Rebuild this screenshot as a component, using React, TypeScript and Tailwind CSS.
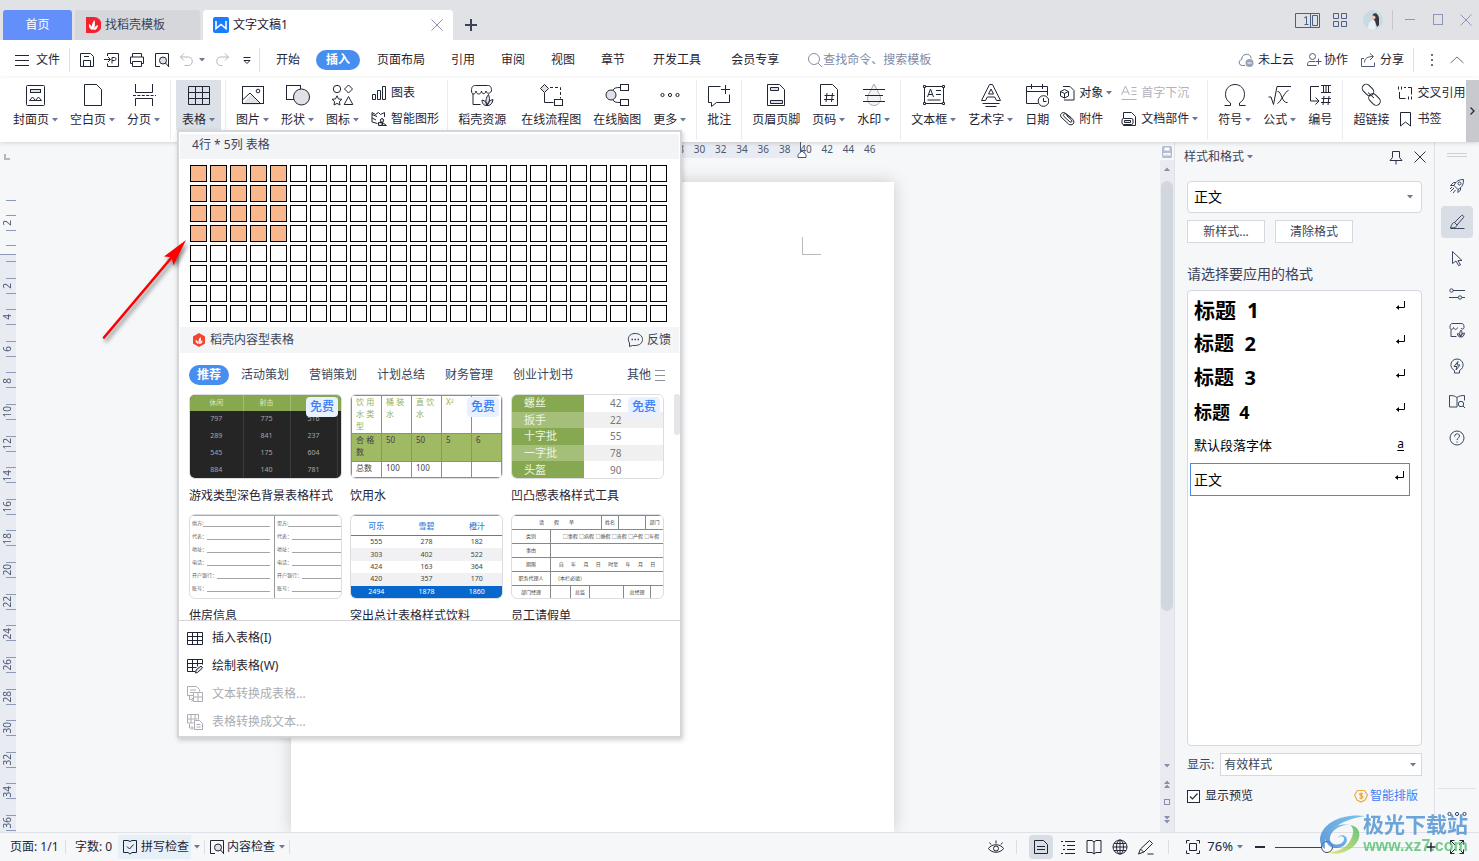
import { useState } from 'react';
import type { ReactNode } from 'react';

/* ---------- icons ---------- */

const SOFT = '#dfe1e6';

const icons: Record<string, ReactNode> = {
  // ribbon, 24 x 24
  cover: (
    <>
      <rect x="2.5" y="2.5" width="18" height="20" rx="1" />
      <rect x="6.5" y="6.5" width="10" height="3" fill={SOFT} />
      <path d="M5.5 17.5l3-3.5 3 3.5zM11.5 17.5l3-3.5 3 3.5z" />
    </>
  ),
  blank: <path d="M3.5 1.5h12l5 5v16h-17z M15.5 1.5l5 5" />,
  pageBreak: (
    <>
      <path d="M3.5 1v8.500h17V1M3.500 23v-7.500h17V23" />
      <path d="M1 12.500h23" strokeDasharray="3 1.400" />
    </>
  ),
  table: <path d="M1.500 3.500h21v18h-21zM1.500 9.500h21M1.500 15.500h21M8.500 3.500v18M15.500 9.500v12M15.500 9.500v-6" />,
  picture: (
    <>
      <path d="M2 20.500l8-9 10 10H2z" fill={SOFT} stroke="none" />
      <rect x="1.500" y="3.500" width="21" height="17" />
      <path d="M1.500 17l7.500-7 10.500 10.500" />
      <circle cx="17" cy="8" r="1.800" />
    </>
  ),
  shape: (
    <>
      <rect x="0.500" y="2.500" width="14" height="14" />
      <circle cx="15.500" cy="14" r="8" fill={SOFT} />
    </>
  ),
  glyphs: (
    <>
      <circle cx="6" cy="6" r="3.700" />
      <path d="M17.500 2l4 4-4 4-4-4zM6 12.800l1.500 3.100 3.400.4-2.500 2.300.6 3.400-3-1.600-3 1.600.6-3.400-2.500-2.300 3.400-.4zM17.500 13.500l4.300 8h-8.600z" />
    </>
  ),
  shop: (
    <>
      <path d="M10.500 21.500h-7.500v-11M1.500 8c0-4 1-5.500 4-5.500h12c3 0 4 1.500 4 5.500M1.500 8c0 4 4 4 4.500 0 .5 4 5 4 5.500 0 .5 4 4 3 4.500 0 .5 3 4 3 5.500 0" />
      <path d="M17 22.500c-2-4-1-8 1.500-11 1.500 4 1.500 7-1.500 11zM17 22.500c-3 0-5-1.500-5-5.500 3 .5 5 2.500 5 5.500zM17 22.500c3 .5 5.500-2 6-6-3 .5-5.500 3-6 6z" fill={SOFT} />
    </>
  ),
  flow: (
    <>
      <path d="M5.500 1.500l4 4-4 4-4-4z" fill={SOFT} />
      <path d="M5.500 10v9.500h9" />
      <path d="M11 4.500h10.500v11" strokeDasharray="3 2" />
      <rect x="15.500" y="16.500" width="8" height="6" />
    </>
  ),
  mind: (
    <>
      <circle cx="6" cy="12" r="5" fill={SOFT} />
      <rect x="15.500" y="1.500" width="8" height="6" />
      <rect x="15.500" y="16.500" width="8" height="6" />
      <path d="M8 7c1-2 3-2.500 7-2.500M8 17c1 2 3 2.500 7 2.500" />
    </>
  ),
  more: (
    <>
      <circle cx="4.500" cy="12" r="1.600" />
      <circle cx="12" cy="12" r="1.600" />
      <circle cx="19.500" cy="12" r="1.600" />
    </>
  ),
  comment: <path d="M13.500 3.500h-12v16h3v4l5-4h13v-8M18.500 2v9M14 6.500h9" />,
  headerFooter: (
    <>
      <path d="M3.500 1.500h12l5 5v16h-17z" />
      <path d="M6.500 4.500h8v3h-8zM6.500 17.500h12v3h-12z" fill={SOFT} />
    </>
  ),
  pageNo: <path d="M3.500 1.500h12l5 5v16h-17zM10 10l-1 9M15.500 10l-1 9M7.500 12.500h10M7 16.500h10" />,
  watermark: (
    <>
      <path d="M12 1l-5.500 10.500c-3 6 1 11 5.500 11s8.500-5 5.500-11z" fill="#f3f3f6" stroke="#a5a9b6" />
      <path d="M1 6.500h22M3 12.500h18M1 18.500h22" />
    </>
  ),
  textBox: (
    <>
      <rect x="2.500" y="3.500" width="19" height="17" />
      <path d="M5.500 14l3-8 3 8M6.500 11.500h4M14 7.500h5M14 11.500h5M5.500 17h13" />
      <path d="M1.500 2.500h2v2h-2zM20.500 2.500h2v2h-2zM1.500 19.500h2v2h-2zM20.500 19.500h2v2h-2z" fill="#fff" />
    </>
  ),
  wordArt: (
    <>
      <path d="M10.500 1.500h3l8 16h-4l-1.800-3.500h-7.400l-1.800 3.500h-4zM12 6l-2.500 5h5z" />
      <path d="M3.500 20.500h17M6.500 23.500h11" />
    </>
  ),
  date: (
    <>
      <path d="M13 20.500h-11.500v-17h21v9M1.500 8.500h21M6.500 1v5M17.500 1v5" />
      <circle cx="18.500" cy="18" r="5.300" fill="#fff" />
      <path d="M18.500 15v3.500h3" />
    </>
  ),
  omega: <path d="M1.500 22.500h6v-2.500c-3-1.800-5-4.500-5-8.500 0-6 4.200-10 9.500-10s9.500 4 9.500 10c0 4-2 6.700-5 8.500v2.500h6" />,
  formula: <path d="M0.500 14h2.500l2.500 7.500 3.500-18h14M9.500 8.500c4-1 4 12 10 11M20.500 7.500c-3 0-8 12-11 13" />,
  numbering: <path d="M11 3.500h-8.500v14.500h8M7.500 14.500l3.500 3.500-3.500 3.500M13 2.500h10M13 9.500h10M15.500 2.500v7M18 2.500v7M20.500 2.500v7M16 13l-1 9M21 13l-1 9M13.500 15.500h9.500M13 19.500h9.500" />,
  link: (
    <>
      <rect x="2.500" y="3" width="13" height="8" rx="4" transform="rotate(45 9 7)" />
      <rect x="9" y="12.500" width="13" height="8" rx="4" transform="rotate(45 15.500 16.500)" />
      <path d="M9 9.500l6 5.500" />
    </>
  ),
  // 16 x 16
  chart: <path d="M1.500 9.500h3v5h-3zM6.500 5.500h3v9h-3zM11.500 1.500h3v13h-3z" />,
  smartArt: (
    <>
      <path d="M6.500 12.500l-5.500-1.500v-9.500l3.500 2 3-2M1 3.500l5 2M1 7l4 2M13.500 6v-4.500l-4 2-2-2" />
      <path d="M11 7.500c2 0 2 3 1 3.500h-2c-1-.5-1-3.500 1-3.500zM7.500 11.500h3.500v3h-3.500zM11.500 11.500l4 3h-4z" fill={SOFT} />
    </>
  ),
  object: (
    <>
      <path d="M4 1.500h7l4 4v9.500h-10" />
      <path d="M5.500 4.500l4 2v4.500l-4 2-4-2v-4.500zM1.500 6.500l4 2 4-2M5.500 8.500v4.500" fill="#fff" />
    </>
  ),
  clip: <path d="M12 6.500l-6-4.500c-3-1.500-5.500 1.500-4 4l7.500 7c3.500 2.500 7-1 4.500-4.500l-7-5.500c-2-.8-3.500 1-2 2.500l6 5.500c1.500.7 2.500-.6 1.500-2l-5-4.500" />,
  dropCap: <path d="M0.500 10l4-9 4 9M2 7h5M10.500 2.500h5M10.500 6h5M10.500 9.500h5M0.500 14.500h15" />,
  parts: (
    <>
      <path d="M2.500 7v-5.500h8l4 4v9h-12v-1" />
      <rect x="1" y="7.500" width="11" height="6" rx="1.500" fill="#fff" />
      <path d="M3.500 9.500h6v2h-6z" fill={SOFT} />
    </>
  ),
  crossRef: <path d="M2.500 7v6.500h6M11 2.500h3.500v7M1.500 1.500v3M4.500 1.500v3M7 2.500h2M11.500 11.500v3M14.500 11.500v3" />,
  bookmark: <path d="M3.500 1.500h10v13.500l-5-4-5 4z" />,
  save: <path d="M1.500 1.500h10l3 3v10h-13zM4.500 14.500v-6h7v6M5 4.500h5" />,
  exportPdf: <path d="M3.500 4v-2.500h11v13h-11v-3M0 7.500h6M4 5l2.500 2.500-2.500 2.500M8 11.500v-6h2.500c2 0 2 3 0 3h-2.500" />,
  print: <path d="M3.500 5v-3.500h9v3.500M3.500 11.500h-2v-6.500h13v6.500h-2M3.500 9.500h9v5h-9z" />,
  preview: (
    <>
      <path d="M6 14.500h-4.500v-13h13v13" />
      <circle cx="9" cy="8.500" r="3.500" fill={SOFT} />
      <path d="M11.500 11l3.500 4" />
    </>
  ),
  undo: <path d="M5 1.500l-3.500 3.500 3.500 3.500M1.500 5h8c5 0 5 8.500 0 8.500h-4" />,
  redo: <path d="M11 1.500l3.500 3.500-3.500 3.500M14.500 5h-8c-5 0-5 8.500 0 8.500h2" />,
  chevBar: <path d="M4.500 5.500h7M5 8.500l3 3 3-3z" />,
  search: (
    <>
      <circle cx="7" cy="7" r="5.500" />
      <path d="M11 11l4 4" />
    </>
  ),
  cloud: (
    <>
      <path d="M7 13.500h-2.500c-4 0-4.500-5-.8-6 0-6.500 9-7 9.500-1" />
      <circle cx="11.500" cy="11" r="4" fill="#9aa3ba" stroke="none" />
      <path d="M9.500 11h4" stroke="#fff" />
    </>
  ),
  people: (
    <>
      <circle cx="6.500" cy="4.500" r="3" />
      <path d="M9 9.500h-5c-2 0-2.500 1.500-2.500 4h9M12.500 6.500v6M9.500 9.500h6" />
    </>
  ),
  share: <path d="M4 6.500h-2.500v8h13v-4M4.500 10.500c0-4 3-6 8.500-6M10 1.500l3.500 3-3.500 3.500" />,
  close: <path d="M2.500 2.500l11 11M13.500 2.500l-11 11" />,
  plus: <path d="M8 2v12M2 8h12" strokeWidth="2" />,
  min: <path d="M3 7.500h10" />,
  max: <rect x="3.500" y="2.500" width="9" height="10" />,
  up: <path d="M1.500 11l6.500-6 6.500 6" />,
  burger: <path d="M1 3.500h14M1 8.500h14M1 13.500h14" />,
  grid4: <path d="M1.500 1.500h5v5h-5zM9.500 1.500h5v5h-5zM1.500 9.500h5v5h-5zM9.500 9.500h5v5h-5z" />,
  pin: <path d="M4.500 2.500h7v6l2.500 3h-12l2.500-3zM8 11.500v4" />,
  bubble: (
    <>
      <path d="M2.500 14.500v-3.500c-3-5 0-9.500 5.500-9.500 4.500 0 7.500 2.500 7.500 6s-3 6-7.500 6h-2.500z" />
      <path d="M4.500 7.500h1.500M7.500 7.500h1.500M10.500 7.500h1.500" strokeWidth="1.500" />
    </>
  ),
  grid: <path d="M0.500 2.500h15v12h-15zM0.500 6.500h15M0.500 10.500h15M5.500 2.500v12M10.500 2.500v12" />,
  drawGrid: (
    <>
      <path d="M8 13.500h-7.500v-12h15v5M0.500 5.500h15M0.500 9.500h9M5.500 1.500v12M10.500 1.500v7" />
      <path d="M8.500 15l.5-3 5-4 1.500 2-5 4.500z" fill={SOFT} />
    </>
  ),
  textToTable: <path d="M6 9.500h-5.500v-9h9l3 3v2M3 4h6M3 6.500h3M6.500 6.500h9v9h-9zM6.500 11h9M11 6.500v9M2.500 9.500v4h3M4.500 11.500l2 2-2 2" />,
  tableToText: <path d="M0.500 0.500h11v5M0.500 5h10M0.500 9h6M0.500 .5v8.500M4 .5v8.500M8 .5v5M7.500 6.500h5l3 3v6h-8zM9.500 10.500h4M9.500 13h4M2.500 10v4h3M4.500 12l2 2-2 2" />,
  rocket: (
    <>
      <path d="M5 7.500c2-4.500 5-6 9.500-6 0 4.500-1 7.500-5.500 10zM5 7.500l-3.500 0 3-3h2.500M9 11.500v3l2.500-2.500v-2.500M5 10l-3.500 3.500M3 9l-2 2M6.500 12l-2.500 3" />
      <circle cx="10.500" cy="5.500" r="1.500" />
    </>
  ),
  brush: <path d="M1.500 14.500h14M5.500 8.500l7-7c1-1 3 1 2 2l-6.500 7.500zM5.500 8.500c-2 0-2.500 1.500-4 5.500 4 0 6.500-1 6.500-3z" />,
  cursor: <path d="M3.500 1.500l9.500 9h-4l2.500 4.500-2 .5-2.500-4.500-3.500 2.500z" />,
  sliders: (
    <>
      <path d="M4 4.500h12M0 11.500h9M13 11.500h3" />
      <circle cx="2.500" cy="4.500" r="1.700" />
      <circle cx="11" cy="11.500" r="1.700" />
    </>
  ),
  sideShop: (
    <>
      <path d="M7.500 14.500h-5.500v-7M1 5.500c0-3 .5-4 3-4h8c2.500 0 3 1 3 4 0 2-2.500 2-3 .5M1 5.500c0 2.500 3 2.500 3.500 0 .5 2.500 3.500 2.500 4 0" />
      <path d="M11.500 15c-1.500-2.500-1-5 .5-7 1.500 2 1.500 5-.5 7zM11.500 15c-2 0-3-1.500-3-3.500 1.500 0 3 1.500 3 3.500zM11.500 15c2 .5 3.500-1 4-4-2 0-4 2-4 4z" fill={SOFT} />
    </>
  ),
  bulb: <path d="M5.500 12.500c-6-3-4-11.500 2.500-11.500s8.500 8.500 2.500 11.500v2.500h-5zM9 3.500l-4 5h3l-1 3.500 4-5h-3z" />,
  bookSearch: (
    <>
      <path d="M8 3.500c-2-1.500-4-2-7.500-2v11.500h7.500zM8 3.500c2-1.500 4-2 7.500-2v5" />
      <circle cx="12" cy="10" r="2.700" />
      <path d="M14 12l2 2" />
    </>
  ),
  help: (
    <>
      <circle cx="8" cy="8" r="7" />
      <path d="M5.500 6.500c0-3.500 5-3.500 5-.5 0 2-2.500 2-2.500 4M8 11.500v1.200" />
    </>
  ),
  spell: <path d="M8 2.500l-2-1h-4.500v12h4.500l2 1.500 2-1.500h4.500v-12h-4.500zM5 7.500l2.500 2.500 4-4.500" />,
  eye: (
    <>
      <path d="M0.500 9.500c3-5 12-5 15 0-3 5-12 5-15 0zM3 5.500l-1.500-2M8 4.500v-3M13 5.500l1.500-2" />
      <circle cx="8" cy="9.500" r="2.500" />
    </>
  ),
  doc: <path d="M1.500 1.500h9l4 4v9h-13zM4 7.500h8M4 10.500h8" />,
  outline: <path d="M1 2.500h2M5 2.500h10M3 6.500h2M7 6.500h8M3 10.500h2M7 10.500h8M1 14.500h2M5 14.500h10" />,
  book: <path d="M8 3l-2-1.500h-5v12h5l2 1.500 2-1.500h5v-12h-5zM8 3v11.500" />,
  globe: (
    <>
      <circle cx="8" cy="8" r="7" />
      <ellipse cx="8" cy="8" rx="3.500" ry="7" />
      <path d="M1 8h14M2 4.500h12M2 11.500h12M8 1v14" />
    </>
  ),
  pen: <path d="M0.500 15l2-5 9-8.500 3 3-8.500 8.500zM2.500 10l3 3M9.500 15h6" />,
  fit: <path d="M4.500 4.500h7v7h-7zM1.500 4.500v-3h3M11.500 1.500h3v3M14.500 11.500v3h-3M4.500 14.500h-3v-3" />,
  full: <path d="M6 6l-4.500-4.500M1.500 5.500v-4h4M10 6l4.500-4.500M10.500 1.500h4v4M6 10l-4.500 4.500M1.500 10.500v4h4M10 10l4.500 4.500M14.500 10.500v4h-4" />,
};

function Icon({ name, box = 16, size = 16, className = '' }: { name: string; box?: number; size?: number; className?: string }) {
  return (
    <svg width={size} height={size} viewBox={`0 0 ${box} ${box}`} fill="none" stroke="currentColor" className={`shrink-0 ${className}`} aria-hidden="true">
      {icons[name]}
    </svg>
  );
}

function Caret({ className = 'ml-[3px]' }: { className?: string }) {
  return (
    <svg width="6" height="4" viewBox="0 0 6 4" className={`shrink-0 fill-[#6b7896] ${className}`} aria-hidden="true">
      <path d="M0 0h6L3 3.500z" />
    </svg>
  );
}

/* ---------- title bar ---------- */

function TitleBar() {
  return (
    <header className="flex h-10 items-end bg-[#e1e2e6] pl-[3px] text-[#3b4358]">
      <button className="h-[30px] w-[69px] rounded-t-[3px] bg-[#638ffb] text-white">首页</button>
      <button className="ml-[3px] flex h-[30px] w-[125px] items-center rounded-t-[3px] bg-[#d6d7db] pl-[11px]">
        <svg width="15" height="16" viewBox="0 0 15 16" aria-hidden="true">
          <path d="M0 0h8a7.500 8 0 0 1 0 16h-8z" fill="#f5222d" />
          <path d="M7 13c-2-4-1-7 1.500-10 1 4 .5 7-1.500 10zM6.500 13c-2-.5-4-2.500-3.500-6 2.500 1 3.500 3 3.500 6zM7.500 13c2.500 0 4.500-2 4.500-5-2.500.5-4 2.500-4.500 5z" fill="#fff" />
        </svg>
        <span className="ml-1">找稻壳模板</span>
      </button>
      <div className="ml-[3px] flex h-[30px] w-[250px] items-center rounded-t-[3px] bg-white pr-2 pl-[10px] text-[#1c2233]">
        <svg width="16" height="16" viewBox="0 0 16 16" aria-hidden="true">
          <rect width="16" height="16" rx="2" fill="#1a7dfb" />
          <path d="M3 4v7.500l5-4 5 4v-7.500" fill="none" stroke="#fff" strokeWidth="1.600" />
        </svg>
        <span className="ml-1 flex-1">文字文稿1</span>
        <button aria-label="关闭标签" className="text-[#8b94ab]">
          <Icon name="close" />
        </button>
      </div>
      <button aria-label="新建" className="mb-[7px] ml-[10px]">
        <Icon name="plus" />
      </button>
      <div className="ml-auto flex h-10 items-center pr-[5px] text-[#4e5f84]">
        <button aria-label="窗口" className="mr-[12px]">
          <svg width="25" height="15" viewBox="0 0 25 15" fill="none" stroke="currentColor" aria-hidden="true">
            <path d="M0.500 0.500h24v14h-24zM15.500 0.500v14M17.500 2.500h5v10h-5zM9 5l2.500-1.500v8M9.500 11.500h4" />
          </svg>
        </button>
        <button aria-label="应用" className="mr-[15px]">
          <Icon name="grid4" />
        </button>
        <svg width="20" height="20" viewBox="0 0 20 20" className="mr-[9px]" aria-hidden="true">
          <circle cx="10" cy="10" r="10" fill="#c9dbe2" />
          <path d="M10 4c3-2 5 0 6 4l0 7-2 2-2-6-3-3z" fill="#3b343e" />
          <circle cx="10.500" cy="7.500" r="2" fill="#e8c8bd" />
          <path d="M5 18c0-5 3-8 6-8l2 9c-3 1-6 1-8-1z" fill="#e7f0f3" />
        </svg>
        <span className="mr-[9px] h-5 w-px bg-[#c5c8d0]" />
        <div className="flex gap-3 text-[#8b97b3]">
          <button aria-label="最小化"><Icon name="min" /></button>
          <button aria-label="最大化"><Icon name="max" /></button>
          <button aria-label="关闭"><Icon name="close" /></button>
        </div>
      </div>
    </header>
  );
}

/* ---------- menu row ---------- */

const shortTabs = ['页面布局', '引用', '审阅', '视图', '章节'];
const wideTabs = ['开发工具', '会员专享'];

function MenuRow() {
  return (
    <nav className="flex h-[38px] items-center bg-white pt-px pl-[14px] whitespace-nowrap">
      <button className="flex items-center gap-1.5">
        <Icon name="burger" />
        文件
      </button>
      <span className="mr-[9px] ml-[9px] h-6 w-px bg-[#dfe1e6]" />
      <div className="flex items-center gap-[9px]">
        <button aria-label="保存"><Icon name="save" /></button>
        <button aria-label="输出为PDF"><Icon name="exportPdf" /></button>
        <button aria-label="打印"><Icon name="print" /></button>
        <button aria-label="打印预览"><Icon name="preview" /></button>
      </div>
      <button aria-label="撤销" className="ml-[9px] flex items-center text-[#b3b6bd]">
        <Icon name="undo" />
        <Caret className="ml-1" />
      </button>
      <button aria-label="恢复" className="ml-[9px] text-[#b3b6bd]"><Icon name="redo" /></button>
      <button aria-label="自定义快速访问工具栏" className="ml-[9px]"><Icon name="chevBar" /></button>
      <span className="ml-1 h-6 w-px bg-[#dfe1e6]" />
      <button className="ml-1 px-3">开始</button>
      <button className="mx-1 h-5 w-11 rounded-full bg-[#468ef0] font-bold text-white">插入</button>
      {shortTabs.map((t) => (
        <button key={t} className="px-[13px]">{t}</button>
      ))}
      {wideTabs.map((t) => (
        <button key={t} className="px-[15px]">{t}</button>
      ))}
      <label className="ml-[13px] flex items-center text-[#8490ac]">
        <Icon name="search" />
        <input aria-label="查找命令、搜索模板" placeholder="查找命令、搜索模板" className="w-32 bg-transparent outline-none placeholder:text-[#7f8aa5]" />
      </label>
      <div className="ml-auto flex items-center pr-[14px]">
        <button className="mr-3 flex items-center gap-1"><Icon name="cloud" className="text-[#6b7896]" />未上云</button>
        <button className="mr-3 flex items-center gap-0.5"><Icon name="people" className="text-[#4e5a78]" />协作</button>
        <button className="mr-[9px] flex items-center gap-1"><Icon name="share" className="text-[#4e5a78]" />分享</button>
        <span className="h-6 w-px bg-[#dfe1e6]" />
        <button aria-label="更多选项" className="mr-[14px] ml-[15px] flex flex-col gap-[3px] px-0.5">
          <span className="size-0.5 bg-[#6b7080]" />
          <span className="size-0.5 bg-[#6b7080]" />
          <span className="size-0.5 bg-[#6b7080]" />
        </button>
        <button aria-label="收起功能区" className="text-[#6b7080]"><Icon name="up" /></button>
      </div>
    </nav>
  );
}

/* ---------- ribbon ---------- */

function Big({ icon, label, caret = false, className = '' }: { icon: string; label: string; caret?: boolean; className?: string }) {
  return (
    <button className={`flex h-[50px] shrink-0 flex-col items-center px-1.5 pt-[3px] ${className}`}>
      <Icon name={icon} box={24} size={24} />
      <span className="mt-1 flex items-center leading-[18px]">
        {label}
        {caret && <Caret />}
      </span>
    </button>
  );
}

function Small({ icon, label, caret = false, disabled = false }: { icon: string; label: string; caret?: boolean; disabled?: boolean }) {
  return (
    <button disabled={disabled} className="flex h-[26px] items-center gap-1 disabled:text-[#b0b3ba]">
      <Icon name={icon} />
      <span className="flex items-center">
        {label}
        {caret && <Caret />}
      </span>
    </button>
  );
}

function Sep() {
  return <span className="mx-1 h-[60px] w-px shrink-0 bg-[#ebecef]" />;
}

function Ribbon() {
  return (
    <div className="relative z-20 flex h-16 bg-white whitespace-nowrap shadow-[0_1px_4px_rgba(0,0,0,0.15)]">
      <div className="flex min-w-0 flex-1 pt-0.5 pl-[7px]">
        <Big icon="cover" label="封面页" caret />
        <Big icon="blank" label="空白页" caret />
        <Big icon="pageBreak" label="分页" caret />
        <Sep />
        <div className="relative ml-px shrink-0">
          <Big icon="table" label="表格" caret className="bg-[#dce1e7]" />
          <TableMenu />
        </div>
        <Sep />
        <Big icon="picture" label="图片" caret />
        <Big icon="shape" label="形状" caret />
        <Big icon="glyphs" label="图标" caret />
        <div className="shrink-0 pr-1 pl-1.5">
          <Small icon="chart" label="图表" />
          <Small icon="smartArt" label="智能图形" />
        </div>
        <Sep />
        <Big icon="shop" label="稻壳资源" className="mr-[3px]" />
        <Big icon="flow" label="在线流程图" />
        <Big icon="mind" label="在线脑图" />
        <Big icon="more" label="更多" caret />
        <Sep />
        <Big icon="comment" label="批注" />
        <Sep />
        <Big icon="headerFooter" label="页眉页脚" />
        <Big icon="pageNo" label="页码" caret />
        <Big icon="watermark" label="水印" caret />
        <Sep />
        <Big icon="textBox" label="文本框" caret />
        <Big icon="wordArt" label="艺术字" caret />
        <Big icon="date" label="日期" />
        <div className="shrink-0 px-1">
          <Small icon="object" label="对象" caret />
          <Small icon="clip" label="附件" />
        </div>
        <div className="shrink-0 px-[5px]">
          <Small icon="dropCap" label="首字下沉" disabled />
          <Small icon="parts" label="文档部件" caret />
        </div>
        <Sep />
        <Big icon="omega" label="符号" caret />
        <Big icon="formula" label="公式" caret />
        <Big icon="numbering" label="编号" />
        <Sep />
        <Big icon="link" label="超链接" />
        <div className="shrink-0 pl-0.5">
          <Small icon="crossRef" label="交叉引用" />
          <Small icon="bookmark" label="书签" />
        </div>
      </div>
      <button aria-label="向右滚动" className="relative mt-0.5 flex w-[13px] shrink-0 items-center justify-center bg-[#c8c9ce]">
        <svg width="5" height="8" viewBox="0 0 5 8" fill="none" stroke="#252b3a" strokeWidth="1.300" aria-hidden="true">
          <path d="M0.500 0.500l3.500 3.500-3.500 3.500" />
        </svg>
      </button>
    </div>
  );
}

/* ---------- table drop-down ---------- */

const COLS = 24;
const ROWS = 8;

function SizePicker({ rows, cols, onPick }: { rows: number; cols: number; onPick: (r: number, c: number) => void }) {
  return (
    <div className="flex flex-col gap-[3px] px-[11px] pt-[6px]">
      {Array.from({ length: ROWS }, (_, r) => (
        <div key={r} className="flex gap-[3px]">
          {Array.from({ length: COLS }, (_, c) => (
            <button
              key={c}
              aria-label={`${r + 1}行 ${c + 1}列`}
              onMouseEnter={() => onPick(r + 1, c + 1)}
              className={`size-[17px] border border-black ${r < rows && c < cols ? 'bg-[#f9b88b]' : 'bg-white'}`}
            />
          ))}
        </div>
      ))}
    </div>
  );
}

function DarkThumb() {
  const rows = [['797', '775', '516'], ['289', '841', '237'], ['545', '175', '604'], ['884', '140', '781']];
  return (
    <table className="h-full w-full table-fixed bg-[#252526] text-center text-[7px] leading-[16px] text-[#a5a5a5]">
      <thead className="bg-[#88a850] text-[#dbe6c4]">
        <tr>
          <th className="w-[53px] border-r border-[#a3bd78] font-normal">休闲</th>
          <th className="w-[47px] border-r border-[#a3bd78] font-normal">射击</th>
          <th className="w-[47px] border-r border-[#a3bd78] font-normal" />
          <th />
        </tr>
      </thead>
      <tbody>
        {rows.map((r) => (
          <tr key={r[0]}>
            {r.map((v) => (
              <td key={v} className="border-r border-[#3a3a3b]">{v}</td>
            ))}
            <td />
          </tr>
        ))}
      </tbody>
    </table>
  );
}

function WaterThumb() {
  return (
    <table className="h-full w-full table-fixed text-[8px] leading-[12px] whitespace-normal text-[#444] [&_td]:border [&_td]:border-[#8d8d8d] [&_td]:px-1 [&_td]:align-top">
      <tbody>
        <tr className="h-[38px] text-[#93b154]">
          <td>饮 用<br />水 类<br />型</td>
          <td>桶 装<br />水</td>
          <td>直 饮<br />水</td>
          <td>X<sup className="text-[5px]">2</sup></td>
          <td />
        </tr>
        <tr className="h-[28px] bg-[#a0ba64]">
          <td>合 格<br />数</td>
          <td>50</td>
          <td>50</td>
          <td>5</td>
          <td>6</td>
        </tr>
        <tr>
          <td className="whitespace-nowrap">总数</td>
          <td>100</td>
          <td>100</td>
          <td />
          <td />
        </tr>
      </tbody>
    </table>
  );
}

function ToolThumb() {
  const rows = [['螺丝', '42'], ['扳手', '22'], ['十字批', '55'], ['一字批', '78'], ['头盔', '90']];
  return (
    <table className="h-full w-full table-fixed text-[11px] leading-[16px]">
      <tbody>
        {rows.map(([name, n], i) => (
          <tr key={name}>
            <th className={`w-[72px] pl-3 text-left font-normal text-[#eef4e2] ${i % 2 ? 'bg-[#a5bf7b]' : 'bg-[#86a851]'}`}>{name}</th>
            <td className={`pl-[26px] text-[10px] text-[#777] ${i % 2 ? 'bg-[#f0f0f0]' : 'bg-white'}`}>{n}</td>
          </tr>
        ))}
      </tbody>
    </table>
  );
}

const contractFields = ['代表：', '地址：', '电话：', '开户银行：', '账号：'];

function ContractThumb() {
  return (
    <div className="grid h-full grid-cols-[85px_1fr] border-t border-[#aaa] text-[5px] leading-[8px] text-[#666]">
      {['供方:', '需方:'].map((head, i) => (
        <div key={head} className={`flex flex-col justify-around pb-1 pl-[2px] ${i === 0 ? 'border-r border-[#999] pr-1' : ''}`}>
          {[head, ...contractFields].map((f) => (
            <div key={f} className="flex items-end">
              {f}
              <span className="flex-1 border-b border-[#a5a5a5]" />
            </div>
          ))}
        </div>
      ))}
    </div>
  );
}

function DrinkThumb() {
  const rows = [['555', '278', '182'], ['303', '402', '522'], ['424', '163', '364'], ['420', '357', '170']];
  return (
    <table className="h-full w-full table-fixed border-t border-[#999] text-center text-[7px] leading-[12px] text-[#444]">
      <thead>
        <tr className="h-[20px] border-b border-[#777] text-[8px] text-[#3585d8]">
          <th className="font-medium">可乐</th>
          <th className="font-medium">雪碧</th>
          <th className="font-medium">橙汁</th>
        </tr>
      </thead>
      <tbody>
        {rows.map((r, i) => (
          <tr key={r[0]} className={i % 2 ? 'bg-[#f1f1f4]' : 'bg-white'}>
            {r.map((v) => (
              <td key={v}>{v}</td>
            ))}
          </tr>
        ))}
        <tr className="bg-[#0667cd] text-white">
          <td>2494</td>
          <td>1878</td>
          <td>1860</td>
        </tr>
      </tbody>
    </table>
  );
}

function LeaveThumb() {
  return (
    <div className="flex h-full flex-col border-t border-[#888] text-center text-[5px] leading-[13px] whitespace-nowrap text-[#444] [&>div]:flex [&>div]:flex-1 [&>div]:border-b [&>div]:border-[#888]">
      <div>
        <span className="w-[89px]">请　　假　　单</span>
        <span className="w-[18px] border-x border-[#888]">姓名</span>
        <span className="w-[27px] border-r border-[#888]" />
        <span className="flex-1">部门</span>
      </div>
      <div>
        <span className="w-[39px] border-r border-[#888]">类别</span>
        <span className="flex-1 overflow-hidden pl-2">□事假 □病假 □婚假 □丧假 □产假 □年假</span>
      </div>
      <div>
        <span className="w-[39px] border-r border-[#888]">事由</span>
      </div>
      <div>
        <span className="w-[39px] border-r border-[#888]">期限</span>
        <span className="flex flex-1 justify-around px-1">
          <span>自</span><span>年</span><span>月</span><span>日</span><span>时至</span><span>年</span><span>月</span><span>日</span>
        </span>
      </div>
      <div>
        <span className="w-[39px] border-r border-[#888]">职务代理人</span>
        <span className="pl-1">（本栏必填）</span>
      </div>
      <div>
        <span className="w-[39px] border-r border-[#888]">部门经理</span>
        <span className="w-[20px] border-r border-[#888]" />
        <span className="w-[19px] border-r border-[#888]">总监</span>
        <span className="w-[34px] border-r border-[#888]" />
        <span className="w-[27px] border-r border-[#888]">总经理</span>
      </div>
    </div>
  );
}

const templates = [
  { title: '游戏类型深色背景表格样式', free: true, thumb: <DarkThumb /> },
  { title: '饮用水', free: true, thumb: <WaterThumb /> },
  { title: '凹凸感表格样式工具', free: true, thumb: <ToolThumb /> },
  { title: '供房信息', free: false, thumb: <ContractThumb /> },
  { title: '突出总计表格样式饮料', free: false, thumb: <DrinkThumb /> },
  { title: '员工请假单', free: false, thumb: <LeaveThumb /> },
];

const categories = ['活动策划', '营销策划', '计划总结', '财务管理', '创业计划书'];

const tableActions = [
  { icon: 'grid', label: '插入表格(I)', disabled: false },
  { icon: 'drawGrid', label: '绘制表格(W)', disabled: false },
  { icon: 'textToTable', label: '文本转换成表格...', disabled: true },
  { icon: 'tableToText', label: '表格转换成文本...', disabled: true },
];

function TableMenu() {
  const [size, setSize] = useState({ rows: 4, cols: 5 });

  return (
    <div className="absolute top-[50px] left-px w-[505px] border-2 border-[#d4d6da] bg-white pt-0.5 text-[#3b4358] shadow-[1px_2px_5px_rgba(0,0,0,0.2)]">
      <div className="mx-px h-[25px] bg-[#f3f4f6] pl-3 leading-[22px]">
        {size.rows}行 * {size.cols}列 表格
      </div>
      <SizePicker rows={size.rows} cols={size.cols} onPick={(rows, cols) => setSize({ rows, cols })} />
      <div className="mx-px mt-[5px] flex h-[26px] items-center bg-[#f3f5f7] pr-2 pl-3">
        <svg width="14" height="16" viewBox="0 0 14 16" aria-hidden="true">
          <path d="M7 1l6 3.500v7l-6 3.500-6-3.500v-7z" fill="#f5432e" />
          <path d="M7 12c-1-3-.5-5 1.500-7 1 3 .5 5-1.500 7zM6.500 12c-2-.5-3-2-3-4 2 .5 3 2 3 4zM7.500 12c2 0 3-1.500 3-3.500-2 .5-3 1.500-3 3.500z" fill="#fff" />
        </svg>
        <span className="ml-1 flex-1">稻壳内容型表格</span>
        <button className="flex items-center gap-1">
          <Icon name="bubble" />
          反馈
        </button>
      </div>
      <div className="mt-3 flex h-5 items-center pr-[14px] pl-[10px]">
        <button className="h-5 w-10 rounded-full bg-[#468ef0] font-bold text-white">推荐</button>
        <div className="ml-3 flex flex-1 gap-5">
          {categories.map((c) => (
            <button key={c}>{c}</button>
          ))}
        </div>
        <button className="flex items-center gap-[3px]">
          其他
          <svg width="12" height="12" viewBox="0 0 12 12" stroke="#8b91a0" aria-hidden="true">
            <path d="M1 1.500h10M1 6.500h10M1 11.500h10" />
          </svg>
        </button>
      </div>
      <div className="mt-[9px] flex h-[227px] items-start justify-between overflow-hidden border-b border-[#d4d6da] pl-[10px]">
        <div className="grid grid-cols-[repeat(3,153px)] gap-x-2">
          {templates.map((t) => (
            <button key={t.title} className="flex h-[120px] flex-col items-start justify-start text-left text-[#1f2533]">
              <span className="relative block h-[85px] w-[153px]">
                <span className="block h-full w-full overflow-hidden rounded-md border border-[#dcdde0]">{t.thumb}</span>
                {t.free && (
                  <span className="absolute top-[3px] right-1 h-5 w-8 rounded-sm bg-[#e9f0fe] text-center leading-5 font-medium text-[#3b7ff5]">免费</span>
                )}
              </span>
              <span className="mt-2 block leading-[18px] whitespace-nowrap">{t.title}</span>
            </button>
          ))}
        </div>
        <span className="h-[41px] w-1.5 rounded-full bg-[#e4e6ea]" />
      </div>
      <div className="pt-[3px]">
        {tableActions.map((a) => (
          <button key={a.label} disabled={a.disabled} className="flex h-7 w-full items-center gap-[9px] pl-2 text-[#1f2533] disabled:text-[#aaadb4]">
            <Icon name={a.icon} />
            {a.label}
          </button>
        ))}
      </div>
    </div>
  );
}

/* ---------- document area ---------- */

const vNumbers = Array.from({ length: 18 }, (_, i) => (i + 1) * 2);
const hNumbers = [28, 30, 32, 34, 36, 38, 40, 42, 44, 46];

function VMark({ n }: { n: number }) {
  return (
    <div className="ml-1.5 flex h-4 items-center border-y border-[#8c9ab5]">
      <span className="-ml-1 rotate-180 text-[10px] leading-[10px] [writing-mode:vertical-rl]">{n}</span>
    </div>
  );
}

function VRuler() {
  return (
    <div className="flex w-4 shrink-0 flex-col text-[#4c5872]">
      <div className="h-[113px] border-b border-[#8c9ab5] pt-3">
        <div className="ml-1 size-1.5 border-b-2 border-l-2 border-[#b5b8c2]" />
        <div className="mt-10 ml-1.5 h-[15px] border-t border-[#8c9ab5]" />
        <VMark n={2} />
        <div className="ml-1.5 h-[15px] border-b border-[#8c9ab5]" />
      </div>
      <div className="flex min-h-0 flex-1 flex-col bg-[#e8ebf1] pt-1.5 pb-px">
        <div className="ml-1.5 h-px bg-[#8c9ab5]" />
        {vNumbers.map((n) => (
          <div key={n} className="flex flex-1 flex-col justify-end">
            <VMark n={n} />
          </div>
        ))}
      </div>
    </div>
  );
}

function Canvas() {
  return (
    <main className="flex min-w-0 flex-1 flex-col overflow-hidden pl-2">
      <div className="mx-auto flex h-4 w-[603px] shrink-0">
        <div className="relative ml-[93px] w-[417px] bg-[#e8ebf1] pl-[284px]">
          <div className="flex w-[213px] text-center text-[10px] leading-[15px] text-[#4c5872]">
            {hNumbers.map((n) => (
              <span key={n} className="flex-1">{n}</span>
            ))}
          </div>
          <svg width="10" height="16" viewBox="0 0 10 16" className="absolute top-0 -right-[6px]" aria-hidden="true">
            <path d="M3.500 0v10" stroke="#4c5872" />
            <path d="M1 12.500l4-3.500 4 3.500v3h-8z" fill="#fff" stroke="#4c5872" />
          </svg>
        </div>
      </div>
      <div className="mx-auto mt-6 flex min-h-0 w-[603px] flex-1 justify-end bg-white pt-[55px] pr-[73px] shadow-[0_0_16px_rgba(0,0,0,0.18)]">
        <span className="h-[18px] w-[19px] border-b border-l border-[#b9babd]" />
      </div>
    </main>
  );
}

function Tri({ d }: { d: string }) {
  return (
    <svg width="8" height="8" viewBox="0 0 8 8" className="fill-[#8490ac]" fillRule="evenodd" aria-hidden="true">
      <path d={d} />
    </svg>
  );
}

function ScrollBar() {
  return (
    <div className="flex w-[14px] shrink-0 flex-col items-center bg-[#e9ebf1]">
      <svg width="14" height="18" viewBox="0 0 14 18" className="bg-[#f5f7f9]" aria-hidden="true">
        <rect x="2" y="4" width="10" height="12" rx="1.500" fill="#b4bccf" />
        <path d="M4.500 5.500h5v3h-5zM3.500 14v-3h7v3" fill="#fff" />
        <path d="M7 12v2M5 12.500v1.500M9 12.500v1.500" stroke="#b4bccf" />
      </svg>
      <button aria-label="向上滚动" className="mt-[5px]"><Tri d="M1 6h6l-3-3.500z" /></button>
      <div className="mt-2 h-[430px] w-3 rounded-full bg-[#d2d6df]" />
      <div className="mt-auto flex flex-col items-center gap-2.5 pb-2">
        <button aria-label="向下滚动"><Tri d="M1 2h6l-3 3.500z" /></button>
        <button aria-label="前一页"><Tri d="M1 4h6l-3-3.500zM1 8h6l-3-3.500z" /></button>
        <button aria-label="选择浏览对象"><Tri d="M1 1h6v6h-6zM2 2v4h4v-4z" /></button>
        <button aria-label="下一页"><Tri d="M1 0h6l-3 3.500zM1 4h6l-3 3.500z" /></button>
      </div>
    </div>
  );
}

/* ---------- style panel ---------- */

const styleItems = [
  { name: '标题 1', className: 'text-[21px]' },
  { name: '标题 2', className: 'text-[20px]' },
  { name: '标题 3', className: 'text-[20px]' },
  { name: '标题 4', className: 'text-[18px]' },
];

function Return() {
  return (
    <svg width="11" height="10" viewBox="0 0 11 10" fill="none" stroke="#000" className="mb-2" aria-hidden="true">
      <path d="M9.500 0v6.500h-8" />
      <path d="M4 4v5l-3-2.500z" fill="#000" stroke="none" />
    </svg>
  );
}

function StylePanel() {
  const [current, setCurrent] = useState('正文');
  const [preview, setPreview] = useState(true);

  return (
    <aside className="flex w-[261px] shrink-0 flex-col border-x border-[#dfe1e7] pr-3 pl-3 text-[#3b4358]">
      <div className="flex h-[30px] items-center">
        <button className="-ml-[3px] flex items-center">
          样式和格式
          <Caret />
        </button>
        <button aria-label="固定" className="ml-auto text-[#2b3245]"><Icon name="pin" /></button>
        <button aria-label="关闭窗格" className="-mr-1.5 ml-2 text-[#2b3245]"><Icon name="close" /></button>
      </div>
      <div className="relative mt-[9px]">
        <select aria-label="当前样式" value={current} onChange={(e) => setCurrent(e.target.value)} className="h-8 w-full appearance-none rounded-sm border border-[#d5d8df] bg-white pl-1.5 text-sm text-black">
          <option>正文</option>
        </select>
        <Caret className="pointer-events-none absolute top-[14px] right-[9px]" />
      </div>
      <div className="mt-[7px] flex gap-[10px]">
        <button className="h-[23px] w-[78px] border border-[#d5d8df] bg-white">新样式...</button>
        <button className="h-[23px] w-[78px] border border-[#d5d8df] bg-white">清除格式</button>
      </div>
      <h2 className="mt-[21px] text-sm">请选择要应用的格式</h2>
      <div className="mt-1.5 min-h-0 flex-1 rounded-sm border border-[#d5d8df] bg-white px-0.5 pt-0.5 text-black">
        {styleItems.map((s) => (
          <button key={s.name} className="flex h-[34px] w-[220px] items-center justify-between pr-1 pl-1">
            <span className={`font-bold whitespace-pre ${s.className}`}>{s.name.replace(' ', '  ')}</span>
            <Return />
          </button>
        ))}
        <button className="flex h-[34px] w-[220px] items-center justify-between pr-1.5 pl-1 text-[13px]">
          默认段落字体
          <span className="mb-1 text-xs underline underline-offset-2">a</span>
        </button>
        <button className="flex h-[33px] w-[220px] items-center justify-between border border-[#4a8ae0] pr-1 pl-[3px] text-sm">
          正文
          <Return />
        </button>
      </div>
      <div className="mt-[7px] flex items-center">
        <label htmlFor="show">显示:</label>
        <div className="relative ml-1.5 flex-1">
          <select id="show" className="h-[23px] w-full appearance-none border border-[#d5d8df] bg-white pl-[3px]">
            <option>有效样式</option>
          </select>
          <Caret className="pointer-events-none absolute top-[10px] right-1.5" />
        </div>
      </div>
      <div className="mt-[10px] mb-[26px] flex h-5 items-center">
        <label className="flex items-center gap-[5px] text-[#1f2533]">
          <span className="relative block size-[13px]">
            <input
              type="checkbox"
              checked={preview}
              onChange={(e) => setPreview(e.target.checked)}
              className="block size-[13px] appearance-none border border-[#252b3a] bg-white"
            />
            {preview && (
              <svg width="13" height="13" viewBox="0 0 13 13" fill="none" stroke="#252b3a" strokeWidth="1.200" className="pointer-events-none absolute inset-0" aria-hidden="true">
                <path d="M3 6.500l2.500 2.500 5-5.500" />
              </svg>
            )}
          </span>
          显示预览
        </label>
        <button className="mr-1 ml-auto flex items-center gap-0.5 text-[#3b7ff5]">
          <svg width="14" height="14" viewBox="0 0 14 14" fill="none" stroke="#efaa3c" strokeWidth="1.200" aria-hidden="true">
            <path d="M3.500 1.500h7l3 4.500-2.500 5-4 2-4-2-2.500-5z" />
            <path d="M9 5c-1-1-3.500-1-3.500.3 0 1.700 3.500.9 3.500 2.700 0 1.500-2.500 1.500-3.500.5M7.200 3.500v7" />
          </svg>
          智能排版
        </button>
      </div>
    </aside>
  );
}

const sideTools = [
  { icon: 'rocket', label: '快速' },
  { icon: 'brush', label: '样式' },
  { icon: 'cursor', label: '选择' },
  { icon: 'sliders', label: '属性' },
  { icon: 'sideShop', label: '稻壳' },
  { icon: 'bulb', label: '推荐' },
  { icon: 'bookSearch', label: '查阅' },
  { icon: 'help', label: '帮助' },
];

function SideBar() {
  return (
    <div className="flex w-11 shrink-0 flex-col items-center text-[#3b4660]">
      <div className="mt-[11px] h-1 w-5 border-y border-[#cdd0d7]" />
      <div className="mt-[13px] flex flex-col gap-1">
        {sideTools.map((t) => (
          <button
            key={t.icon}
            aria-label={t.label}
            className={`flex size-8 items-center justify-center rounded-sm ${t.icon === 'brush' ? 'bg-[#d8dde6]' : ''}`}
          >
            <Icon name={t.icon} />
          </button>
        ))}
      </div>
      <div className="mt-auto mb-1.5 flex w-[38px] justify-center border-t border-[#dfe1e7] pt-[13px]">
        <Icon name="more" box={24} size={24} />
      </div>
    </div>
  );
}

/* ---------- status bar ---------- */

function Bar({ className = '' }: { className?: string }) {
  return <span className={`h-[14px] w-px bg-[#dcdfe5] ${className}`} />;
}

function StatusBar() {
  const [zoom, setZoom] = useState(76);

  return (
    <footer className="flex h-[29px] shrink-0 items-center border-t border-[#e0e2e8] bg-[#f5f7f9] pl-[10px] whitespace-nowrap">
      <span className="w-[55px]">页面: 1/1</span>
      <Bar className="mr-[9px]" />
      <span className="w-[43px]">字数: 0</span>
      <button className="flex h-6 items-center gap-[3px] bg-[#e7eff9] pr-0.5 pl-1">
        <Icon name="spell" />
        拼写检查
      </button>
      <Caret />
      <Bar className="mx-1" />
      <button className="flex items-center gap-0.5">
        <Icon name="preview" />
        内容检查
      </button>
      <Caret className="ml-1" />
      <Bar className="ml-1" />
      <div className="ml-auto flex items-center pr-[14px]">
        <button aria-label="护眼模式"><Icon name="eye" /></button>
        <Bar className="mx-3" />
        <button aria-label="页面视图" className="mr-[7px] flex size-6 items-center justify-center rounded-sm bg-[#d8dde6]"><Icon name="doc" /></button>
        <div className="flex gap-[10px]">
          <button aria-label="大纲"><Icon name="outline" /></button>
          <button aria-label="阅读版式"><Icon name="book" /></button>
          <button aria-label="Web版式"><Icon name="globe" /></button>
          <button aria-label="写作模式"><Icon name="pen" /></button>
        </div>
        <Bar className="mr-4 ml-[14px]" />
        <button aria-label="适合页面"><Icon name="fit" /></button>
        <button className="ml-1.5 flex items-center text-[13px]">
          {zoom}%
          <Caret className="ml-1" />
        </button>
        <button aria-label="缩小" className="ml-3 flex h-4 w-[10px] items-center"><span className="h-0.5 w-full bg-[#252b3a]" /></button>
        <input
          type="range"
          aria-label="缩放"
          min={10}
          max={200}
          value={zoom}
          onChange={(e) => setZoom(Number(e.target.value))}
          className="mr-1.5 ml-[10px] h-4 w-[144px] appearance-none bg-transparent [&::-webkit-slider-runnable-track]:h-px [&::-webkit-slider-runnable-track]:bg-[linear-gradient(to_right,#3b4358_36%,#cfd3db_36%)] [&::-webkit-slider-thumb]:-mt-1.5 [&::-webkit-slider-thumb]:size-3 [&::-webkit-slider-thumb]:appearance-none [&::-webkit-slider-thumb]:rounded-full [&::-webkit-slider-thumb]:border [&::-webkit-slider-thumb]:border-[#3b4358] [&::-webkit-slider-thumb]:bg-white"
        />
        <button aria-label="放大"><Icon name="plus" size={12} /></button>
        <button aria-label="全屏" className="ml-3"><Icon name="full" /></button>
      </div>
    </footer>
  );
}

/* ---------- overlays ---------- */

function RedArrow() {
  return (
    <svg width="100" height="110" viewBox="0 0 100 110" className="pointer-events-none absolute top-[235px] left-[98px] z-30 drop-shadow-[2px_3px_2px_rgba(0,0,0,0.5)]" aria-hidden="true">
      <path d="M6 102.500L74 22" stroke="#fe0000" strokeWidth="2.600" strokeLinecap="round" />
      <path d="M88 5L66 21.500l7.500.8 2 8z" fill="#fe0000" />
    </svg>
  );
}

function SiteBadge() {
  return (
    <div className="pointer-events-none absolute right-[11px] bottom-[5px] z-30 flex items-end opacity-80">
      <svg width="46" height="42" viewBox="0 0 46 42" className="-mr-0.5" aria-hidden="true">
        <defs>
          <linearGradient id="sky" x1="0" y1="1" x2="1" y2="0">
            <stop offset="0" stopColor="#3f7fd0" />
            <stop offset="1" stopColor="#58b8ea" />
          </linearGradient>
          <linearGradient id="leaf" x1="0" y1="1" x2="1" y2="0">
            <stop offset="0" stopColor="#e3e25a" />
            <stop offset="1" stopColor="#45b85e" />
          </linearGradient>
        </defs>
        <path d="M46 2C24-1 2 9 1 25c0 5 2 8 5 10-2-15 10-28 40-33z" fill="url(#sky)" />
        <path d="M31 11c-11-1-21 7-20 15 1 6 12 6 14 0 1-4-4-5-6-2 1-4 9-4 9 2-1 9-17 12-21 1-2-9 9-19 24-16z" fill="url(#sky)" />
        <path d="M31 11c13 2 12 16 0 24-8 5-16 6-22 3 12 0 20-6 23-13 3-6 3-11-1-14z" fill="url(#leaf)" />
      </svg>
      <div className="text-center">
        <div className="text-[21px] leading-6 font-bold text-[#4b8fd0]">极光下载站</div>
        <div className="font-['Liberation_Sans',sans-serif] text-base leading-5 font-bold text-[#58bf72]">www.xz7.com</div>
      </div>
    </div>
  );
}

export default function App() {
  return (
    <div className="relative flex h-screen flex-col overflow-hidden bg-[#f5f7f9] font-['Noto_Sans','Noto_Sans_CJK_SC',sans-serif] text-xs text-[#1f2533]">
      <TitleBar />
      <MenuRow />
      <Ribbon />
      <div className="flex min-h-0 flex-1">
        <VRuler />
        <Canvas />
        <ScrollBar />
        <StylePanel />
        <SideBar />
      </div>
      <StatusBar />
      <RedArrow />
      <SiteBadge />
    </div>
  );
}
